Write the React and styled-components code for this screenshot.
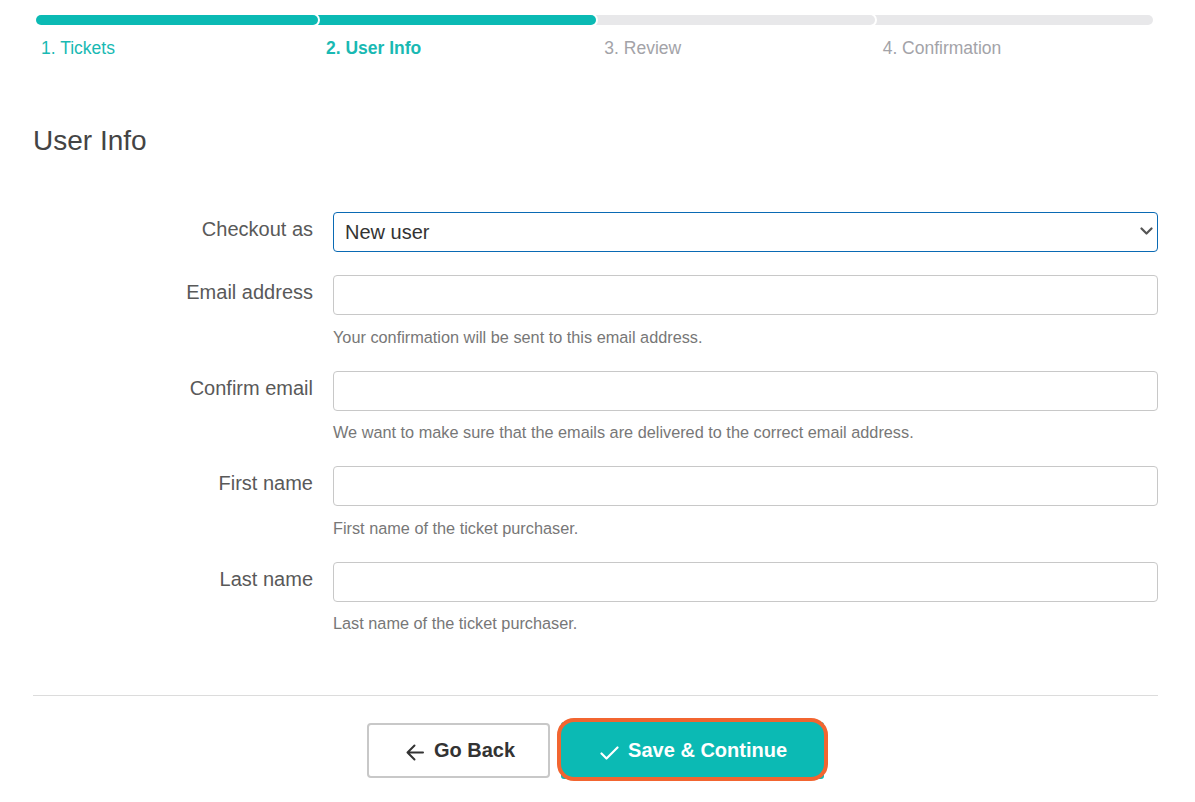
import React from 'react';
import styled, { createGlobalStyle } from 'styled-components';

const teal = '#0bbab4';

const GlobalStyle = createGlobalStyle`
    body {
        margin: 0;
        background: #fff;
        font-family: "Liberation Sans", Arial, sans-serif;
    }
`;

const steps = [
    { label: '1. Tickets', done: true },
    { label: '2. User Info', done: true, current: true },
    { label: '3. Review' },
    { label: '4. Confirmation' },
];

const fields = [
    { label: 'Email address', help: 'Your confirmation will be sent to this email address.' },
    { label: 'Confirm email', help: 'We want to make sure that the emails are delivered to the correct email address.' },
    { label: 'First name', help: 'First name of the ticket purchaser.' },
    { label: 'Last name', help: 'Last name of the ticket purchaser.' },
];

const ArrowIcon = () => (
    <svg width="18" height="17" viewBox="0 0 18 17" fill="none" stroke="currentColor" strokeWidth="2" strokeLinecap="round" strokeLinejoin="round">
        <path d="M17 8.5H1.5M8.5 1.5L1.5 8.5L8.5 15.5" />
    </svg>
);

const CheckIcon = () => (
    <svg width="19" height="14" viewBox="0 0 19 14" fill="none" stroke="currentColor" strokeWidth="2.2" strokeLinecap="round" strokeLinejoin="round">
        <path d="M1.5 7.5L6.5 12.5L17.5 1.5" />
    </svg>
);

const ChevronIcon = () => (
    <svg width="13" height="8" viewBox="0 0 13 8" fill="none" stroke="currentColor" strokeWidth="2.2" strokeLinecap="round" strokeLinejoin="round">
        <path d="M1.5 1.5L6.5 6.5L11.5 1.5" />
    </svg>
);

const App = () => {
    return (
        <Page>
            <GlobalStyle />
            <Steps>
                {steps.map((step, i) => (
                    <Step key={step.label}>
                        <Bar $done={step.done} $first={i === 0} $z={steps.length - i} />
                        <StepLabel $done={step.done} $current={step.current} $first={i === 0}>{step.label}</StepLabel>
                    </Step>
                ))}
            </Steps>

            <Heading>User Info</Heading>

            <Form>
                <Row>
                    <Label>Checkout as</Label>
                    <Field>
                        <SelectWrap>
                            <Select defaultValue="new">
                                <option value="new">New user</option>
                                <option value="existing">Existing user</option>
                            </Select>
                            <Chevron><ChevronIcon /></Chevron>
                        </SelectWrap>
                    </Field>
                </Row>
                {fields.map((f) => (
                    <Row key={f.label}>
                        <Label>{f.label}</Label>
                        <Field>
                            <Input type="text" />
                            <Help>{f.help}</Help>
                        </Field>
                    </Row>
                ))}
            </Form>

            <Divider />

            <Actions>
                <BackButton>
                    <ArrowIcon />
                    Go Back
                </BackButton>
                <SaveButton>
                    <CheckIcon />
                    Save &amp; Continue
                </SaveButton>
            </Actions>
        </Page>
    )
}

const Page = styled.div`
    padding: 15px 37px 20px 33px;
`;
const Steps = styled.div`
    display: grid;
    grid-template-columns: 282px repeat(3, 1fr);
    padding: 0 5px 0 3px;
`;
const Step = styled.div`
    display: flex;
    flex-direction: column;
`;
const Bar = styled.div`
    position: relative;
    z-index: ${({$z}) => $z};
    height: 10px;
    border-radius: 5px;
    background: ${({$done}) => $done ? teal : '#e8e8ea'};
    box-shadow: 0 0 0 2px #fff;
    margin-left: ${({$first}) => $first ? '0' : '-8px'};
`;
const StepLabel = styled.div`
    margin-top: 13px;
    padding-left: ${({$first}) => $first ? '5px' : '8px'};
    font-size: 17.5px;
    line-height: 21px;
    font-weight: ${({$current}) => $current ? 700 : 400};
    color: ${({$done}) => $done ? '#19b9b3' : '#a3a3a8'};
`;
const Heading = styled.h2`
    margin: 65px 0 0;
    font-size: 28px;
    line-height: 34px;
    font-weight: 400;
    color: #444;
`;
const Form = styled.div`
    margin-top: 54px;
    display: flex;
    flex-direction: column;
    gap: 23px;
`;
const Row = styled.div`
    display: grid;
    grid-template-columns: 280px 1fr;
    column-gap: 20px;
`;
const Label = styled.label`
    text-align: right;
    font-size: 20px;
    line-height: 24px;
    padding-top: 5px;
    color: #595959;
`;
const Field = styled.div`
    display: flex;
    flex-direction: column;
`;
const SelectWrap = styled.div`
    position: relative;
`;
const Select = styled.select`
    appearance: none;
    width: 100%;
    height: 40px;
    box-sizing: border-box;
    border: 1px solid #0a6ab4;
    border-radius: 4px;
    background: #fff;
    padding: 0 30px 0 11px;
    font-family: "Liberation Sans", Arial, sans-serif;
    font-size: 20px;
    color: #333;
    outline: none;
`;
const Chevron = styled.span`
    position: absolute;
    right: 5px;
    top: 15px;
    color: #555;
    display: flex;
    pointer-events: none;
`;
const Input = styled.input`
    height: 40px;
    box-sizing: border-box;
    border: 1px solid #c8c8c8;
    border-radius: 4px;
    padding: 0 11px;
    font-family: "Liberation Sans", Arial, sans-serif;
    font-size: 20px;
    outline: none;
`;
const Help = styled.div`
    margin: 11.5px 0 1.1px;
    font-size: 16.3px;
    line-height: 20px;
    color: #777;
`;
const Divider = styled.hr`
    margin: 61px 0 0;
    border: none;
    border-top: 1px solid #dcdcdc;
`;
const Actions = styled.div`
    margin-top: 26px;
    display: flex;
    justify-content: center;
    align-items: center;
    gap: 11px;
`;
const BackButton = styled.button`
    display: flex;
    align-items: center;
    gap: 10px;
    height: 55px;
    padding: 0 33px 0 37px;
    border: 2px solid #c8c8c8;
    border-radius: 4px;
    background: #fff;
    font-family: "Liberation Sans", Arial, sans-serif;
    font-size: 20px;
    font-weight: 700;
    color: #333;
    svg { margin-top: 3px; }
`;
const SaveButton = styled.button`
    position: relative;
    display: flex;
    align-items: center;
    gap: 9px;
    height: 57px;
    padding: 0 37px 0 39px;
    border: none;
    border-radius: 3px;
    background: ${teal};
    font-family: "Liberation Sans", Arial, sans-serif;
    font-size: 20px;
    font-weight: 700;
    color: #fff;
    svg { margin-top: 4px; }
    &::after {
        content: '';
        position: absolute;
        top: -4px;
        bottom: -2px;
        left: -4px;
        right: -4px;
        border: 4px solid #f26530;
        border-radius: 17px;
    }
`;

export default App;
